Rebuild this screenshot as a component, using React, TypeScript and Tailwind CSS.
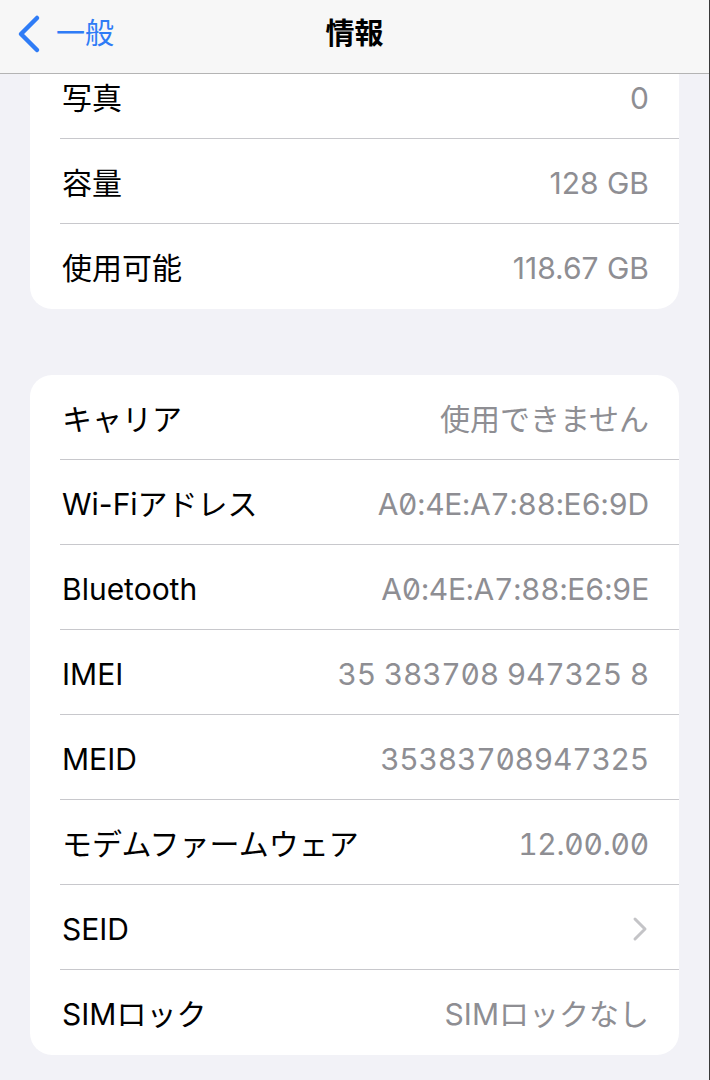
import React from 'react';

type Row = { label: string; value?: string; chevron?: boolean; mono?: boolean };

const storage: Row[] = [
  { label: '写真', value: '0' },
  { label: '容量', value: '128 GB' },
  { label: '使用可能', value: '118.67 GB' },
];

const network: Row[] = [
  { label: 'キャリア', value: '使用できません' },
  { label: 'Wi-Fiアドレス', value: 'A0:4E:A7:88:E6:9D', mono: true },
  { label: 'Bluetooth', value: 'A0:4E:A7:88:E6:9E', mono: true },
  { label: 'IMEI', value: '35 383708 947325 8', mono: true },
  { label: 'MEID', value: '35383708947325', mono: true },
  { label: 'モデムファームウェア', value: '12.00.00', mono: true },
  { label: 'SEID', chevron: true },
  { label: 'SIMロック', value: 'SIMロックなし' },
];

const font = 'font-["Inter","Noto_Sans_CJK_JP",sans-serif]';

const Card: React.FC<{ rows: Row[] }> = ({ rows }) => (
  <div className="mx-[30px] rounded-[22px] bg-white overflow-hidden">
    {rows.map((r, i) => (
      <div key={r.label} className="pl-[30px]">
        <div
          className={`h-[85px] pt-[4px] flex items-center justify-between pr-[30px] ${
            i < rows.length - 1 ? 'border-b border-[#c8c8cc]' : ''
          }`}
        >
          <span className="pl-[2px] text-[30px] text-black">{r.label}</span>
          {r.chevron ? (
            <svg width="16" height="26" viewBox="0 0 16 26" className="mr-[1px]">
              <path d="M3 3l10 10-10 10" fill="none" stroke="#c4c4c7" strokeWidth="3" strokeLinecap="round" strokeLinejoin="round" />
            </svg>
          ) : (
            <span
              className={`text-[30px] text-[#8e8e93] ${
                r.mono ? 'tabular-nums slashed-zero tracking-[-0.25px]' : ''
              }`}
            >
              {r.value}
            </span>
          )}
        </div>
      </div>
    ))}
  </div>
);

export default function App() {
  return (
    <div className={`relative min-h-screen bg-[#f2f2f7] border-r border-[#3a3a3a] ${font}`}>
      <div className="absolute top-0 left-0 right-0 z-10 h-[74px] pb-[6px] bg-[#f7f7f7] border-b border-[#b4b4b4] flex items-center">
        <div className="flex items-center pl-[16px] gap-[14px] text-[#2f7cf6]">
          <svg width="26" height="40" viewBox="0 0 26 40">
            <path d="M21 4L5 20l16 16" fill="none" stroke="#2f7cf6" strokeWidth="4.5" strokeLinecap="round" strokeLinejoin="round" />
          </svg>
          <span className="text-[29px]">一般</span>
        </div>
        <div className="absolute left-0 right-0 text-center text-[29px] font-bold text-black pointer-events-none">
          情報
        </div>
      </div>
      <div className="pt-[54px] pb-[40px] flex flex-col gap-[66px]">
        <Card rows={storage} />
        <Card rows={network} />
      </div>
    </div>
  );
}
